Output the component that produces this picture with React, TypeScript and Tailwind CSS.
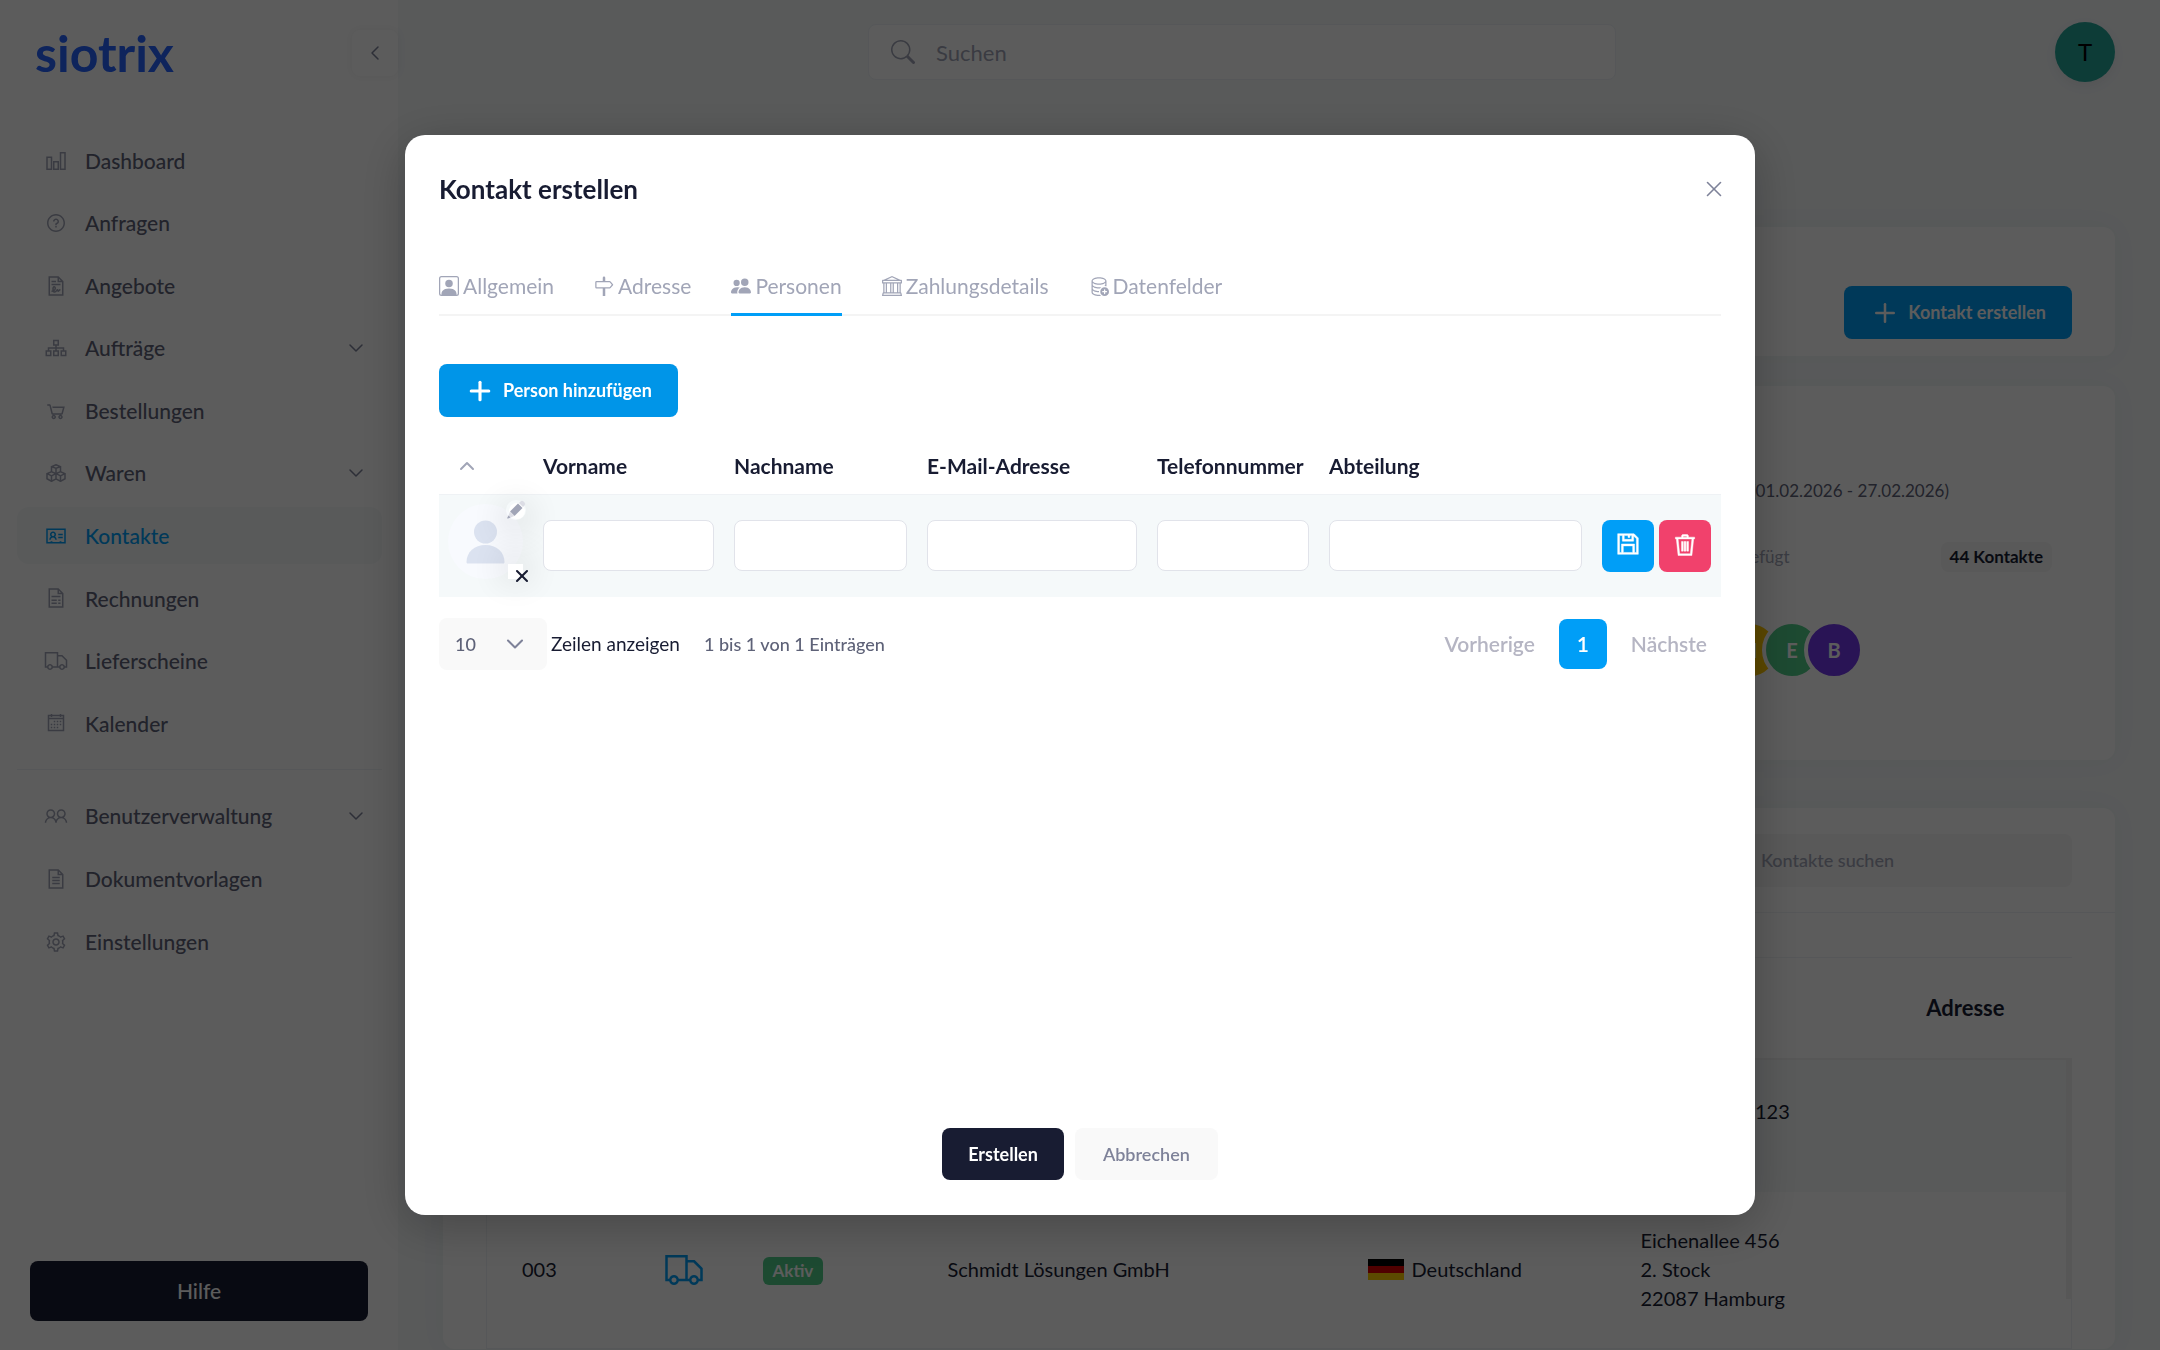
import type { ReactNode } from "react";
import type { IconType } from "react-icons";
import {
  BsBank,
  BsDatabaseAdd,
  BsPeopleFill,
  BsPersonSquare,
  BsSearch,
  BsSignpost,
} from "react-icons/bs";
import {
  LiaAddressCard,
  LiaCalendar,
  LiaChartBarSolid,
  LiaCogSolid,
  LiaCubesSolid,
  LiaFileAlt,
  LiaFileContractSolid,
  LiaFileInvoiceSolid,
  LiaQuestionCircle,
  LiaSave,
  LiaShoppingCartSolid,
  LiaSitemapSolid,
  LiaTrashSolid,
  LiaTruckSolid,
  LiaUserFriendsSolid,
} from "react-icons/lia";
import { ChevronDown, ChevronLeft, ChevronUp, Plus, X } from "lucide-react";

interface NavItem {
  label: string;
  icon: IconType;
  hasChildren?: boolean;
  active?: boolean;
}

const mainNav: NavItem[] = [
  { label: "Dashboard", icon: LiaChartBarSolid },
  { label: "Anfragen", icon: LiaQuestionCircle },
  { label: "Angebote", icon: LiaFileContractSolid },
  { label: "Aufträge", icon: LiaSitemapSolid, hasChildren: true },
  { label: "Bestellungen", icon: LiaShoppingCartSolid },
  { label: "Waren", icon: LiaCubesSolid, hasChildren: true },
  { label: "Kontakte", icon: LiaAddressCard, active: true },
  { label: "Rechnungen", icon: LiaFileInvoiceSolid },
  { label: "Lieferscheine", icon: LiaTruckSolid },
  { label: "Kalender", icon: LiaCalendar },
];

const adminNav: NavItem[] = [
  { label: "Benutzerverwaltung", icon: LiaUserFriendsSolid, hasChildren: true },
  { label: "Dokumentvorlagen", icon: LiaFileAlt },
  { label: "Einstellungen", icon: LiaCogSolid },
];

const tabs: NavItem[] = [
  { label: "Allgemein", icon: BsPersonSquare },
  { label: "Adresse", icon: BsSignpost },
  { label: "Personen", icon: BsPeopleFill, active: true },
  { label: "Zahlungsdetails", icon: BsBank },
  { label: "Datenfelder", icon: BsDatabaseAdd },
];

const personFields = [
  "Vorname",
  "Nachname",
  "E-Mail-Adresse",
  "Telefonnummer",
  "Abteilung",
];

function NavLink({ item }: { item: NavItem }) {
  const Icon = item.icon;
  return (
    <a
      href="#"
      className={`flex h-[57px] items-center rounded-xl pl-[27px] pr-[14px] text-[21px] font-medium ${
        item.active ? "bg-[#f5f8fa] text-[#009ef7]" : "text-[#5e6278]"
      }`}
    >
      <Icon
        className={`size-6 shrink-0 ${item.active ? "text-[#009ef7]" : "text-[#a1a5b7]"}`}
      />
      <span className="ml-[17px] flex-1">{item.label}</span>
      {item.hasChildren && (
        <ChevronDown className="size-6 text-[#7e8299]" strokeWidth={1.5} />
      )}
    </a>
  );
}

function Sidebar() {
  return (
    <aside className="flex w-[398px] shrink-0 flex-col bg-white">
      <div className="flex h-[105px] items-center justify-between pl-[35px]">
        <a href="#" className="text-[50px] font-bold leading-none text-[#2764ff]">
          siotrix
        </a>
        <button
          type="button"
          aria-label="Menü einklappen"
          className="flex size-[46px] items-center justify-center rounded-lg bg-white text-[#7e8299] shadow-[0_0_10px_rgba(0,0,0,0.06)]"
        >
          <ChevronLeft className="size-6" strokeWidth={1.5} />
        </button>
      </div>
      <nav className="flex flex-1 flex-col pl-[17px] pr-4 pt-[27px]">
        <div className="flex h-[620px] flex-col justify-between">
          {mainNav.map((item) => (
            <NavLink key={item.label} item={item} />
          ))}
        </div>
        <hr className="my-[17px] border-[#eff2f5]" />
        <div className="flex flex-col gap-[6px]">
          {adminNav.map((item) => (
            <NavLink key={item.label} item={item} />
          ))}
        </div>
      </nav>
      <div className="px-[30px] pb-[29px]">
        <button
          type="button"
          className="h-[60px] w-full rounded-lg bg-[#181c32] text-[21px] font-medium text-white"
        >
          Hilfe
        </button>
      </div>
    </aside>
  );
}

function TopBar() {
  return (
    <header className="flex h-[104px] items-center px-[45px]">
      <div className="w-[425px]" />
      <div className="flex h-14 w-[748px] items-center rounded-lg border border-[#eff2f5] bg-white pl-[22px]">
        <BsSearch className="size-6 text-[#a1a5b7]" />
        <input
          type="search"
          aria-label="Suchen"
          placeholder="Suchen"
          className="ml-[21px] flex-1 bg-transparent text-[22px] outline-none placeholder:text-[#a1a5b7]"
        />
      </div>
      <button
        type="button"
        className="ml-auto size-[60px] rounded-full bg-[#26a69a] text-[24px] text-black shadow-[0_4px_12px_rgba(0,0,0,0.06)]"
      >
        T
      </button>
    </header>
  );
}

function Card({ className, children }: { className: string; children: ReactNode }) {
  return (
    <section
      className={`rounded-xl bg-white shadow-[0_0_28px_rgba(60,80,30,0.04)] ${className}`}
    >
      {children}
    </section>
  );
}

function Bubble({ className, children }: { className: string; children: ReactNode }) {
  return (
    <span
      className={`-ml-[18px] flex size-[60px] items-center justify-center rounded-full border-4 border-white text-[20px] font-bold text-white ${className}`}
    >
      {children}
    </span>
  );
}

function GermanFlag() {
  return (
    <svg viewBox="0 0 36 21" className="h-[21px] w-9">
      <rect width="36" height="7" fill="#000" />
      <rect y="7" width="36" height="7" fill="#d00" />
      <rect y="14" width="36" height="7" fill="#ffce00" />
    </svg>
  );
}

function ContactsPage() {
  return (
    <main className="flex flex-col px-[45px] pt-[123px] text-[#181c32]">
      <Card className="flex h-[129px] items-end justify-end px-[43px] pb-[17px]">
        <button
          type="button"
          className="flex h-[53px] items-center rounded-lg bg-[#009ef7] px-[26px] text-[18px] font-bold text-white"
        >
          <Plus className="mr-2 size-[30px]" strokeWidth={2} />
          Kontakt erstellen
        </button>
      </Card>

      <Card className="mt-[30px] flex h-[374px] flex-col items-end pt-[90px]">
        <p className="pr-[166px] text-[17px] leading-[30px] text-[#5e6278]">
          (01.02.2026 - 27.02.2026)
        </p>
        <div className="mt-9 flex items-center gap-[151px] pr-[63px]">
          <span className="text-[17px] text-[#a1a5b7]">hinzugefügt</span>
          <span className="flex h-[30px] items-center rounded-lg bg-[#f5f5f5] px-[9px] text-[17px] font-bold">
            44 Kontakte
          </span>
        </div>
        <div className="mt-12 flex pr-[251px]">
          <Bubble className="bg-[#ffc700]">N</Bubble>
          <Bubble className="bg-[#50cd89]">E</Bubble>
          <Bubble className="bg-[#7239ea]">B</Bubble>
        </div>
      </Card>

      <Card className="mt-12">
        <div className="flex h-[105px] items-center justify-end border-b border-[#eff2f5] px-[43px]">
          <input
            type="search"
            aria-label="Kontakte suchen"
            placeholder="Kontakte suchen"
            className="h-[53px] w-[360px] rounded-lg bg-[#f5f5f5] pl-[49px] text-[18px] font-medium outline-none placeholder:text-[#a1a5b7]"
          />
        </div>
        <div className="relative mx-[43px] mt-11">
          <table className="w-full table-fixed border-t border-[#eff2f5] text-left text-[20px] leading-[29px]">
            <colgroup>
              <col className="w-[165px]" />
              <col className="w-[99px]" />
              <col className="w-[185px]" />
              <col className="w-[420px]" />
              <col className="w-[272px]" />
              <col />
            </colgroup>
            <thead>
              <tr className="h-[101px] text-[22px]">
                <th colSpan={5} />
                <th className="pr-[67px] text-right font-bold">Adresse</th>
              </tr>
            </thead>
            <tbody className="border border-[#eff2f5]">
              <tr className="h-[133px] border-t-2 border-[#f1f1f1] bg-[#f5f8fa]">
                <td colSpan={5} />
                <td className="px-[13px]">
                  Hauptstraße 123
                  <br />
                  &nbsp;
                </td>
              </tr>
              <tr className="h-[157px]">
                <td className="pl-[35px]">003</td>
                <td className="px-3">
                  <LiaTruckSolid className="size-10 text-[#009ef7]" />
                </td>
                <td className="px-3">
                  <span className="inline-flex h-7 items-center rounded-md bg-[#50cd89] px-[10px] text-[17px] font-bold text-white">
                    Aktiv
                  </span>
                </td>
                <td className="px-3">Schmidt Lösungen GmbH</td>
                <td className="px-3">
                  <span className="flex items-center gap-2">
                    <GermanFlag />
                    Deutschland
                  </span>
                </td>
                <td className="px-[13px]">
                  Eichenallee 456
                  <br />
                  2. Stock
                  <br />
                  22087 Hamburg
                </td>
              </tr>
            </tbody>
          </table>
          <div className="absolute right-0 top-[102px] h-60 w-[6px] bg-[#f1f1f1]" />
        </div>
      </Card>
    </main>
  );
}

function AvatarPicker() {
  return (
    <div className="relative ml-[9px] mb-2 size-[75px] rounded-full bg-[#f8fafe]">
      <svg viewBox="0 0 75 75" className="size-full text-[#dbe2f0]" fill="currentColor">
        <circle cx="37.500" cy="28" r="11.500" />
        <path d="M18.500 58c0-10 8-17 19-17s19 7 19 17c0 1-.6 1.500-1.500 1.500H20c-.9 0-1.500-.5-1.500-1.500z" />
      </svg>
      <button
        type="button"
        aria-label="Avatar ändern"
        className="absolute -top-1 left-[58px] flex size-5 items-center justify-center rounded-full shadow-[0_8px_30px_10px_rgba(0,0,0,0.07)]"
      >
        <svg viewBox="0 0 20 20" className="size-5">
          <circle cx="11" cy="11" r="8" fill="#fff" />
          <path d="M13 3l1.500-1.500q1.500-1.500 3 0l1 1q1.500 1.500 0 3L17 7z" fill="#dcdde5" />
          <path d="M12 3.500l4.500 4.500-8 8-4.500-4.500z" fill="#a1a5b7" />
          <path d="M4 11.500l4.500 4.500L3 18l-1-1z" fill="#dcdde5" />
          <path d="M2.500 15.500l2 2-2.500 1q-1 .2-.7-.7z" fill="#a1a5b7" />
        </svg>
      </button>
      <button
        type="button"
        aria-label="Avatar entfernen"
        className="absolute left-[60px] top-[60px] size-[15px] bg-white shadow-[0_-4px_30px_10px_rgba(0,0,0,0.07)]"
      >
        <X className="ml-[4px] mt-[2px] size-5 text-[#181c32]" strokeWidth={2.5} />
      </button>
    </div>
  );
}

function PersonTable() {
  return (
    <table className="mt-[21px] w-full table-fixed">
      <colgroup>
        <col className="w-[94px]" />
        <col className="w-[191px]" />
        <col className="w-[193px]" />
        <col className="w-[230px]" />
        <col className="w-[172px]" />
        <col />
        <col className="w-[129px]" />
      </colgroup>
      <thead>
        <tr className="h-14 text-left text-[21px]">
          <th className="pl-4">
            <ChevronUp className="size-6 text-[#a1a5b7]" strokeWidth={2} />
          </th>
          {personFields.map((field) => (
            <th key={field} id={field} className="whitespace-nowrap pl-[10px] font-bold">
              {field}
            </th>
          ))}
          <th />
        </tr>
      </thead>
      <tbody>
        <tr className="h-[103px] border-t border-[#eff2f5] bg-[#f5f9fa]">
          <td>
            <AvatarPicker />
          </td>
          {personFields.map((field) => (
            <td key={field} className="px-[10px]">
              <input
                type="text"
                aria-labelledby={field}
                className="relative block h-[51px] w-full rounded-lg border border-[#e1e3ea] bg-white px-3 text-[18px] outline-none"
              />
            </td>
          ))}
          <td className="pl-[10px]">
            <div className="flex gap-[5px]">
              <button
                type="button"
                aria-label="Speichern"
                className="flex size-[52px] items-center justify-center rounded-lg bg-[#009ef7] text-white"
              >
                <LiaSave className="mb-1 size-[30px]" strokeWidth={0.5} />
              </button>
              <button
                type="button"
                aria-label="Löschen"
                className="flex size-[52px] items-center justify-center rounded-lg bg-[#f1416c] text-white"
              >
                <LiaTrashSolid className="mb-[2px] size-7" strokeWidth={0.5} />
              </button>
            </div>
          </td>
        </tr>
      </tbody>
    </table>
  );
}

function CreateContactDialog() {
  return (
    <div
      role="dialog"
      aria-modal="true"
      aria-labelledby="dialog-title"
      className="flex min-h-[80vh] w-5/8 flex-col rounded-[20px] bg-white px-[34px] pb-[35px] text-[#181c32] shadow-[0_10px_50px_rgba(0,0,0,0.25)]"
    >
      <div className="flex h-[108px] items-center justify-between">
        <h2 id="dialog-title" className="text-[26px] font-bold">
          Kontakt erstellen
        </h2>
        <button type="button" aria-label="Schließen" className="-mr-[6px]">
          <X className="size-[26px] text-[#7e8299]" strokeWidth={1.5} />
        </button>
      </div>

      <div className="mt-[15px] flex gap-10 border-b-2 border-[#f4f4f4]">
        {tabs.map(({ label, icon: Icon, active }) => (
          <button
            key={label}
            type="button"
            className={`-mb-[2px] flex h-[58px] items-center gap-1 border-b-[3px] text-[21px] text-[#a1a5b7] ${
              active ? "border-[#009ef7]" : "border-transparent"
            }`}
          >
            <Icon className="size-5" />
            {label}
          </button>
        ))}
      </div>

      <div className="mt-12">
        <button
          type="button"
          className="flex h-[53px] items-center rounded-lg bg-[#0095e8] px-[26px] text-[18px] font-bold text-white"
        >
          <Plus className="mr-2 size-[30px]" strokeWidth={2.5} />
          Person hinzufügen
        </button>
      </div>

      <PersonTable />

      <div className="mt-[21px] flex items-center text-[19px]">
        <div className="relative mr-1">
          <select
            aria-label="Zeilen anzeigen"
            className="h-[52px] w-[108px] appearance-none rounded-lg bg-[#f9f9f9] pl-4 text-[18px] font-medium text-[#5e6278] outline-none"
          >
            <option>10</option>
          </select>
          <ChevronDown
            className="pointer-events-none absolute right-[18px] top-[12px] size-7 text-[#7e8299]"
            strokeWidth={1.75}
          />
        </div>
        <span>Zeilen anzeigen</span>
        <span className="ml-6 text-[18px] font-medium text-[#5e6278]">
          1 bis 1 von 1 Einträgen
        </span>
        <nav className="ml-auto flex items-center gap-6 pr-[14px] text-[21px] font-semibold text-[#b5b5c3]">
          <button type="button">Vorherige</button>
          <button
            type="button"
            className="h-[50px] w-12 rounded-lg bg-[#009ef7] text-white"
          >
            1
          </button>
          <button type="button">Nächste</button>
        </nav>
      </div>

      <div className="mt-auto flex justify-center gap-[11px] text-[18px]">
        <button
          type="button"
          className="h-[52px] rounded-lg bg-[#181c32] px-[26px] font-bold text-white"
        >
          Erstellen
        </button>
        <button
          type="button"
          className="h-[52px] rounded-lg bg-[#f9f9f9] px-7 font-semibold text-[#7e8299]"
        >
          Abbrechen
        </button>
      </div>
    </div>
  );
}

export default function App() {
  return (
    <div className="flex h-screen overflow-hidden bg-[#f5f8fa] font-[Lato,sans-serif]">
      <Sidebar />
      <div className="min-w-0 flex-1">
        <TopBar />
        <ContactsPage />
      </div>
      <div className="fixed inset-0 z-10 flex items-center justify-center bg-black/64">
        <CreateContactDialog />
      </div>
    </div>
  );
}
